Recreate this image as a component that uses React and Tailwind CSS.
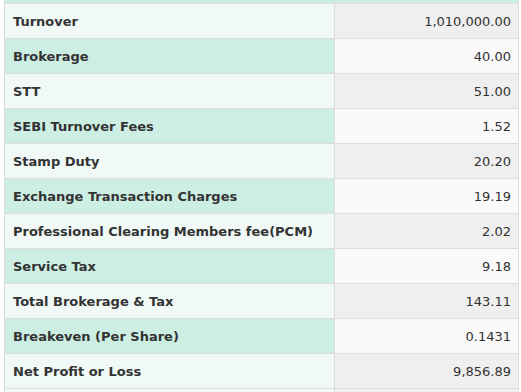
export default function App() {
  const rows = [
    ["Turnover", "1,010,000.00"],
    ["Brokerage", "40.00"],
    ["STT", "51.00"],
    ["SEBI Turnover Fees", "1.52"],
    ["Stamp Duty", "20.20"],
    ["Exchange Transaction Charges", "19.19"],
    ["Professional Clearing Members fee(PCM)", "2.02"],
    ["Service Tax", "9.18"],
    ["Total Brokerage & Tax", "143.11"],
    ["Breakeven (Per Share)", "0.1431"],
    ["Net Profit or Loss", "9,856.89"],
  ];
  return (
    <div
      className="w-[521px] h-[392px] overflow-hidden bg-white text-[13px] text-[#333333]"
      style={{ fontFamily: '"DejaVu Sans", Verdana, sans-serif' }}
    >
      <div className="ml-[4px] w-[515px] border-l border-r border-[#dddddd]">
        <div className="flex h-[4px] border-b border-[#dddddd]">
          <div className="w-[330px] bg-[#cdeee3] border-r border-[#dddddd]" />
          <div className="flex-1 bg-[#cdeee3]" />
        </div>
        {rows.map(([label, value], i) => {
          const odd = i % 2 === 0;
          return (
            <div key={label} className="flex h-[35px] border-b border-[#dddddd]">
              <div
                className={
                  "w-[330px] flex items-center pl-[8px] pt-[2px] font-bold border-r border-[#dddddd] " +
                  (odd ? "bg-[#f0f9f6]" : "bg-[#cdeee3]")
                }
              >
                {label}
              </div>
              <div
                className={
                  "flex-1 flex items-center justify-end pr-[7px] pt-[2px] " +
                  (odd ? "bg-[#efefef]" : "bg-[#fafafa]")
                }
              >
                {value}
              </div>
            </div>
          );
        })}
        <div className="flex h-[10px]">
          <div className="w-[330px] bg-[#f0f9f6] border-r border-[#dddddd]" />
          <div className="flex-1 bg-[#efefef]" />
        </div>
      </div>
    </div>
  );
}
